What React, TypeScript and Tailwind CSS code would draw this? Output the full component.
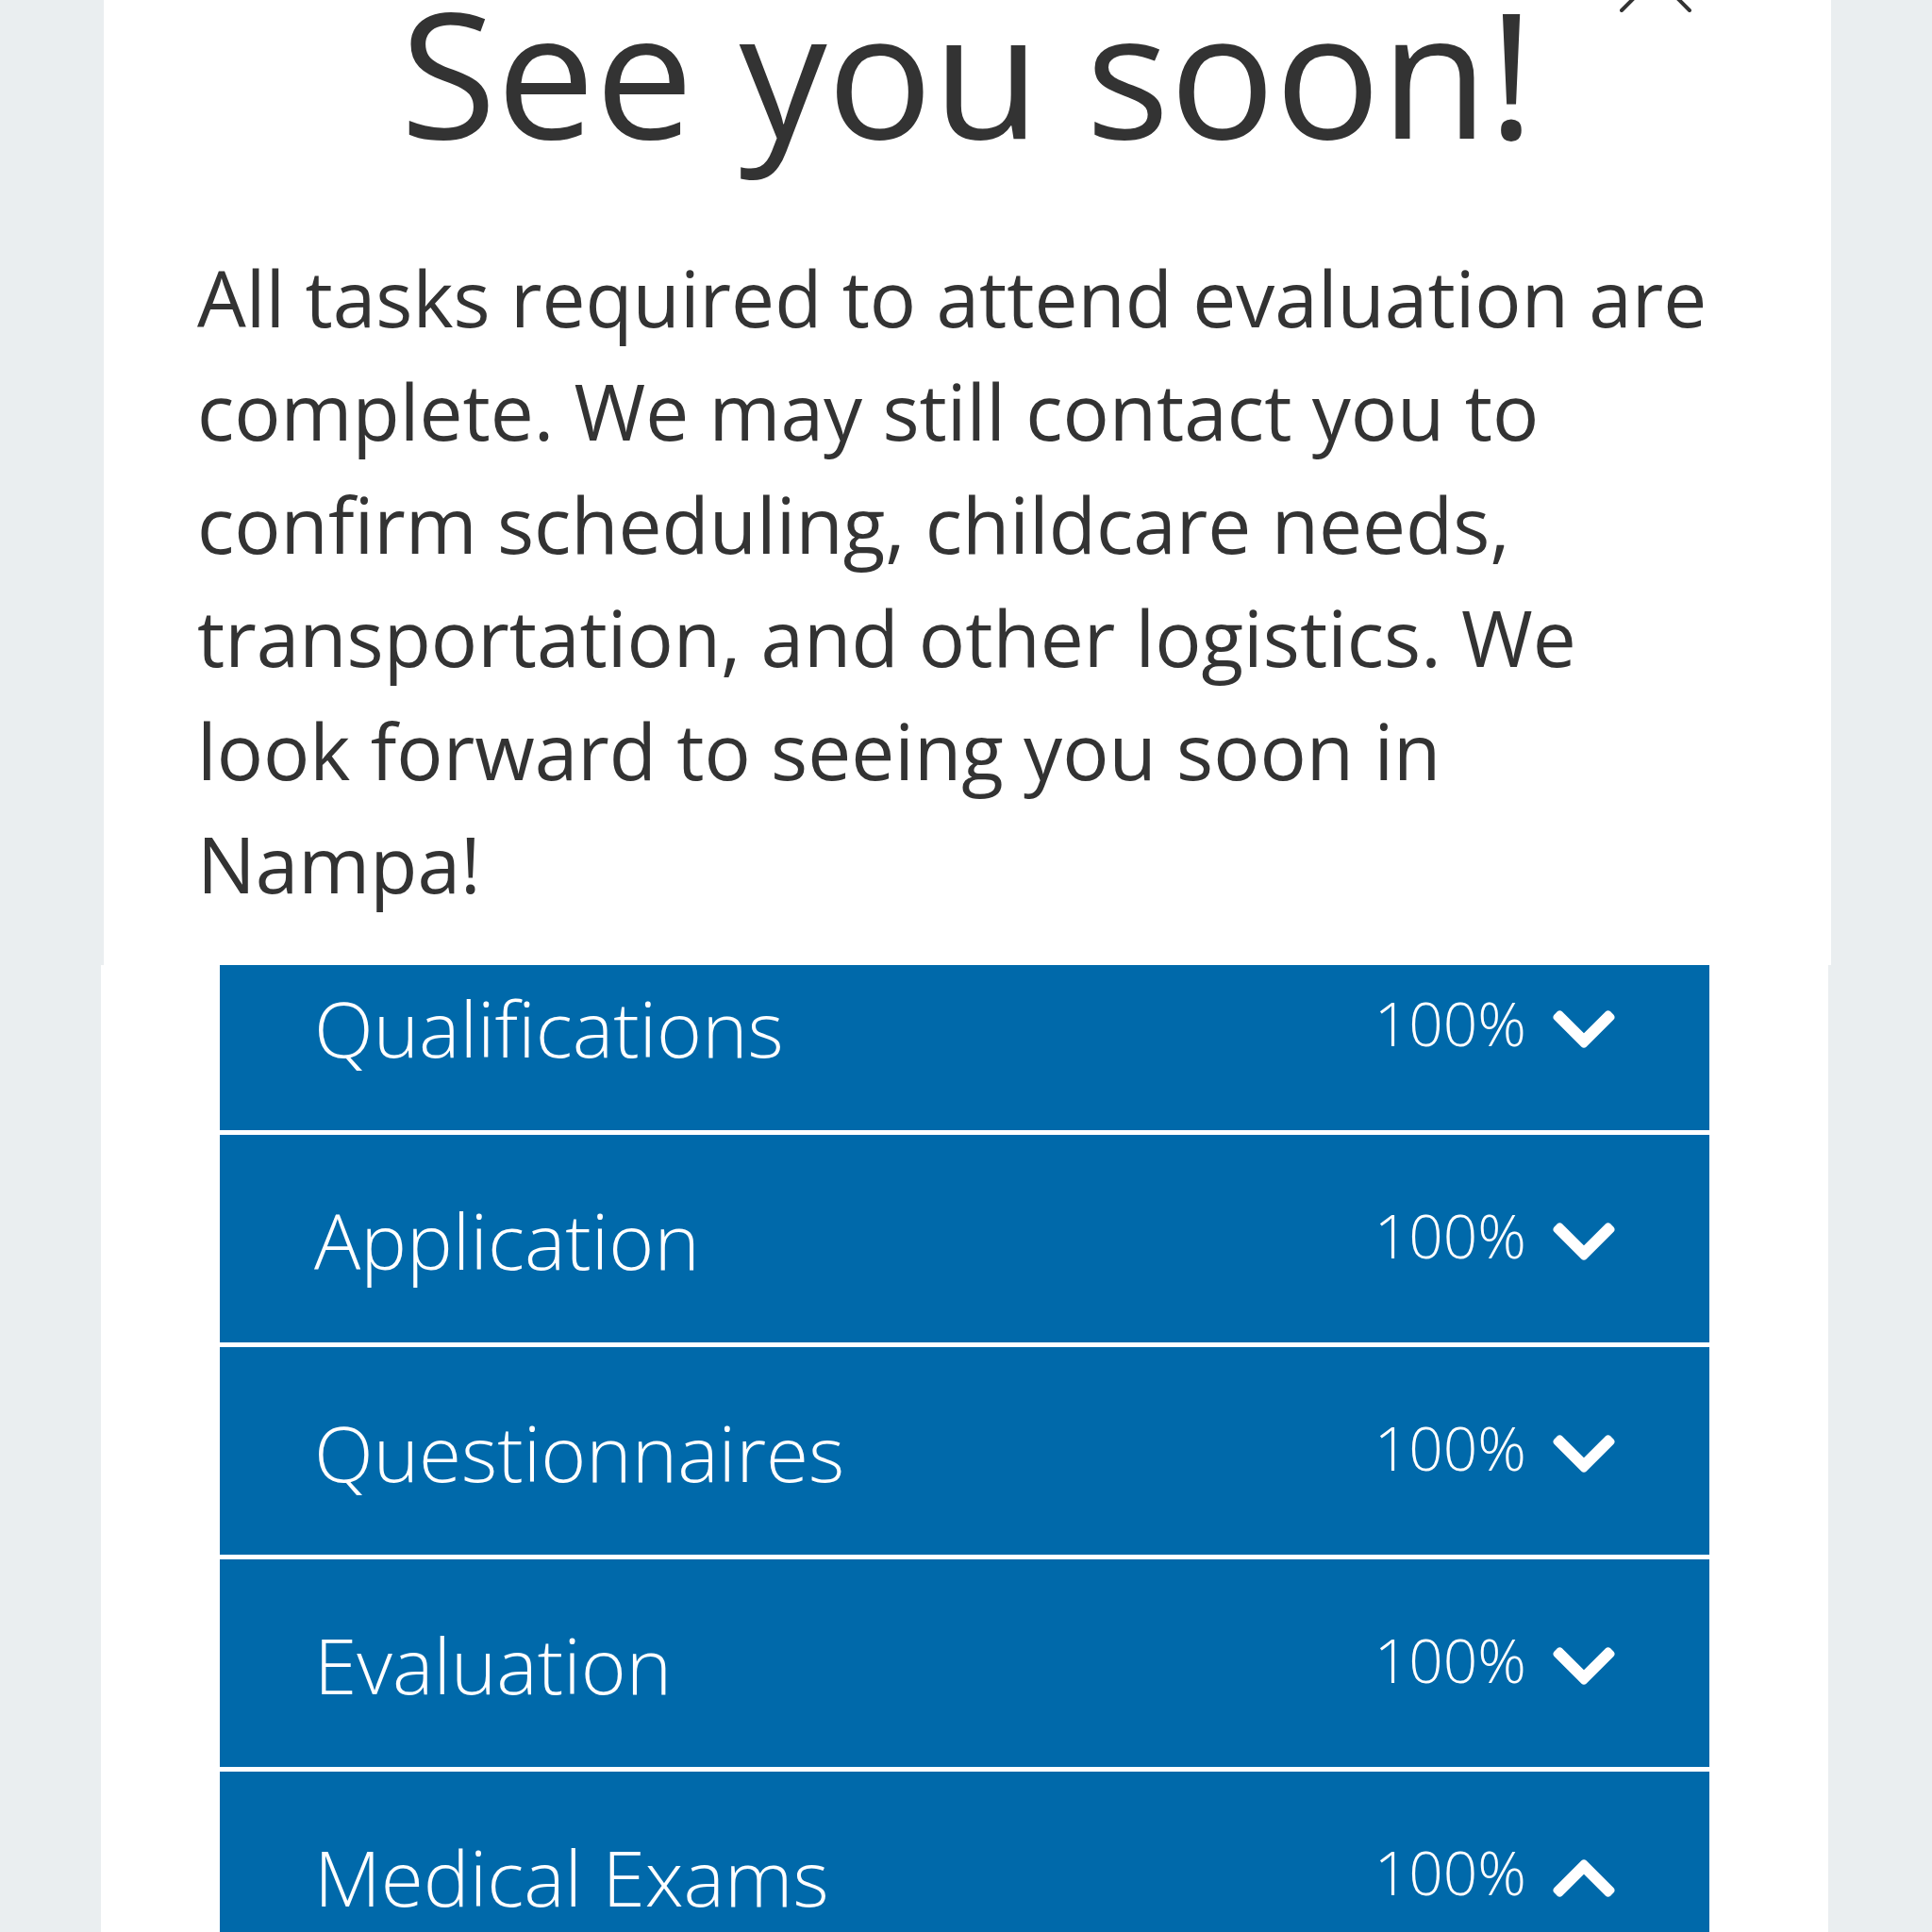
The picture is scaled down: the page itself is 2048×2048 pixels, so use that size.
const rows = [
  { label: 'Qualifications', pct: '100%', open: false },
  { label: 'Application', pct: '100%', open: false },
  { label: 'Questionnaires', pct: '100%', open: false },
  { label: 'Evaluation', pct: '100%', open: false },
  { label: 'Medical Exams', pct: '100%', open: true },
];

const Chevron = ({ up, className }: { up?: boolean; className?: string }) => (
  <svg viewBox="3 123 442 266" className={`${className} ${up ? 'rotate-180' : ''}`} fill="currentColor">
    <path d="M207.029 381.476L12.686 187.132c-9.373-9.373-9.373-24.569 0-33.941l22.667-22.667c9.357-9.357 24.522-9.375 33.901-.04L224 284.505l154.745-154.021c9.379-9.335 24.544-9.317 33.901.04l22.667 22.667c9.373 9.373 9.373 24.569 0 33.941L240.971 381.476c-9.373 9.372-24.569 9.372-33.942 0z" />
  </svg>
);

const Row = ({ label, pct, open, first }: { label: string; pct: string; open: boolean; first?: boolean }) => (
  <div className={`flex bg-[#0069aa] px-[100px] text-white ${first ? 'h-[175px]' : 'h-[220px]'}`}>
    <span className={`flex-1 text-[82px] font-light leading-[80px] ${first ? 'pt-[26px]' : 'pt-[71px]'}`}>{label}</span>
    <span className={`text-[64px] font-light leading-[80px] ${first ? 'pt-[22px]' : 'pt-[67px]'}`}>{pct}</span>
    <Chevron up={open} className={`ml-[28px] h-[42px] w-[66px] ${first ? 'mt-[47px]' : 'mt-[92px]'}`} />
  </div>
);

export default function App() {
  return (
    <div className="h-[2048px] overflow-hidden bg-[#eaeef0] font-['Open_Sans',sans-serif]">
      <div className="relative ml-[110px] w-[1831px] bg-white px-[99px] pb-[48px] text-[#333]">
        <button className="absolute right-[148px] top-[-63px] h-[76px] w-[76px] text-[#333]">
          <svg viewBox="0 0 76 76" className="h-full w-full" stroke="currentColor" strokeWidth="4" strokeLinecap="round">
            <path d="M2 2L74 74M74 2L2 74" />
          </svg>
        </button>
        <h1 className="text-center text-[186px] font-normal leading-[150px]">See you soon!</h1>
        <p className="mt-[105px] text-[82px] leading-[120px]">
          All tasks required to attend evaluation are complete. We may still contact you to confirm scheduling,
          childcare needs, transportation, and other logistics. We look forward to seeing you soon in Nampa!
        </p>
      </div>
      <div className="ml-[107px] flex w-[1831px] flex-col gap-[5px] bg-white px-[126px]">
        {rows.map((r, i) => (
          <Row key={r.label} {...r} first={i === 0} />
        ))}
      </div>
    </div>
  );
}
